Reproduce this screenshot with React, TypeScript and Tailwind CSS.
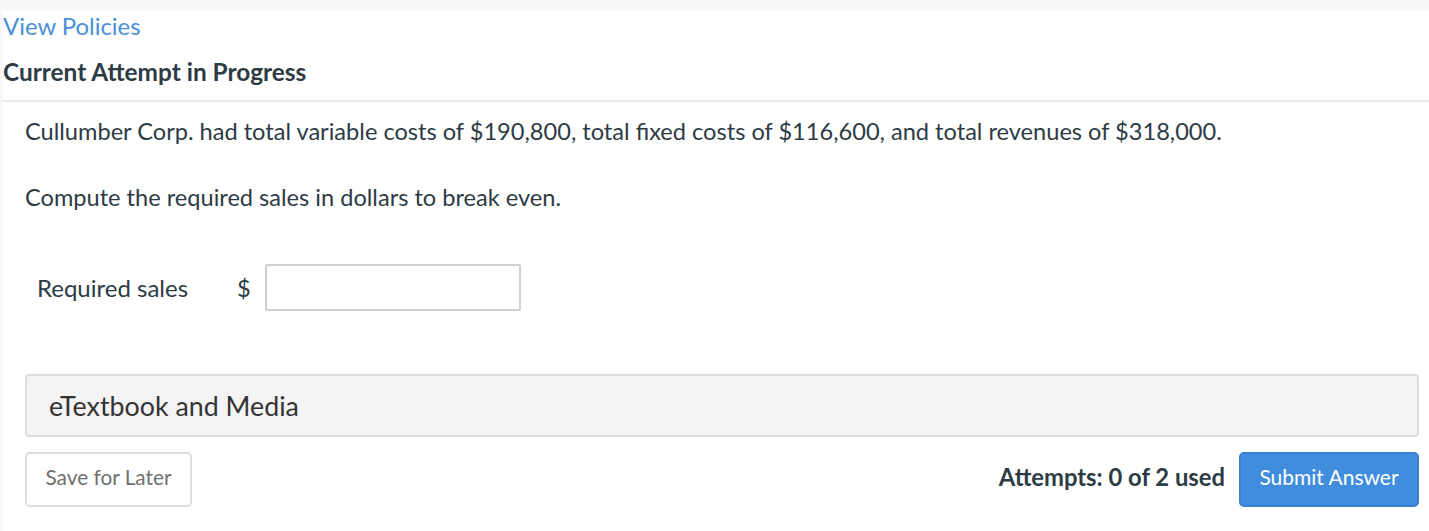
export default function App() {
  return (
    <div className="min-h-[531px] bg-[#f7f7f7] pt-[10px] font-['Lato','Liberation_Sans',sans-serif]">
      <div className="ml-[2px] min-h-[521px] bg-white">
        {/* header */}
        <div className="pl-[1px]">
          <a className="block text-[23.9px] leading-[32px] text-[#4a90d9]">View Policies</a>
          <h2 className="mt-[15px] text-[24.4px] font-bold leading-[30px] text-[#2d3b45]">Current Attempt in Progress</h2>
        </div>
        <div className="mt-[13px] h-[2px] bg-[#ebebeb]" />

        {/* question */}
        <div className="pl-[23px] pr-[10px] text-[#2d3b45]">
          <p className="mt-[13px] text-[23.6px] leading-[32px]">
            Cullumber Corp. had total variable costs of $190,800, total fixed costs of $116,600, and total revenues of $318,000.
          </p>
          <p className="mt-[34px] text-[23.6px] leading-[32px]">Compute the required sales in dollars to break even.</p>

          <div className="mt-[51px] flex items-center pl-[12px]">
            <span className="w-[200px] text-[24px] leading-[32px]">Required sales</span>
            <span className="text-[23.6px] leading-[32px]">$</span>
            <input
              type="text"
              className="ml-[14px] h-[47px] w-[256px] rounded-[2px] border-2 border-[#d0d0d0] bg-white outline-none"
            />
          </div>

          <div className="mt-[63px] flex h-[63px] items-center rounded-[4px] border-2 border-[#dddddd] bg-[#f4f4f4] pl-[22px]">
            <span className="text-[26.8px] leading-[32px] text-[#333333]">eTextbook and Media</span>
          </div>

          <div className="mt-[15px] flex items-center justify-between">
            <button className="h-[55px] w-[167px] rounded-[5px] border-2 border-[#dddddd] bg-white pb-[5px] text-[20.8px] text-[#707070]">
              Save for Later
            </button>
            <div className="flex items-center">
              <span className="pb-[3px] text-[23.8px] font-bold text-[#2d3b45]">Attempts: 0 of 2 used</span>
              <button className="ml-[14px] h-[55px] w-[180px] rounded-[5px] border-2 border-[#3a7fd0] bg-[#418ddd] pb-[5px] text-[21px] text-white">
                Submit Answer
              </button>
            </div>
          </div>
        </div>
      </div>
    </div>
  )
}
